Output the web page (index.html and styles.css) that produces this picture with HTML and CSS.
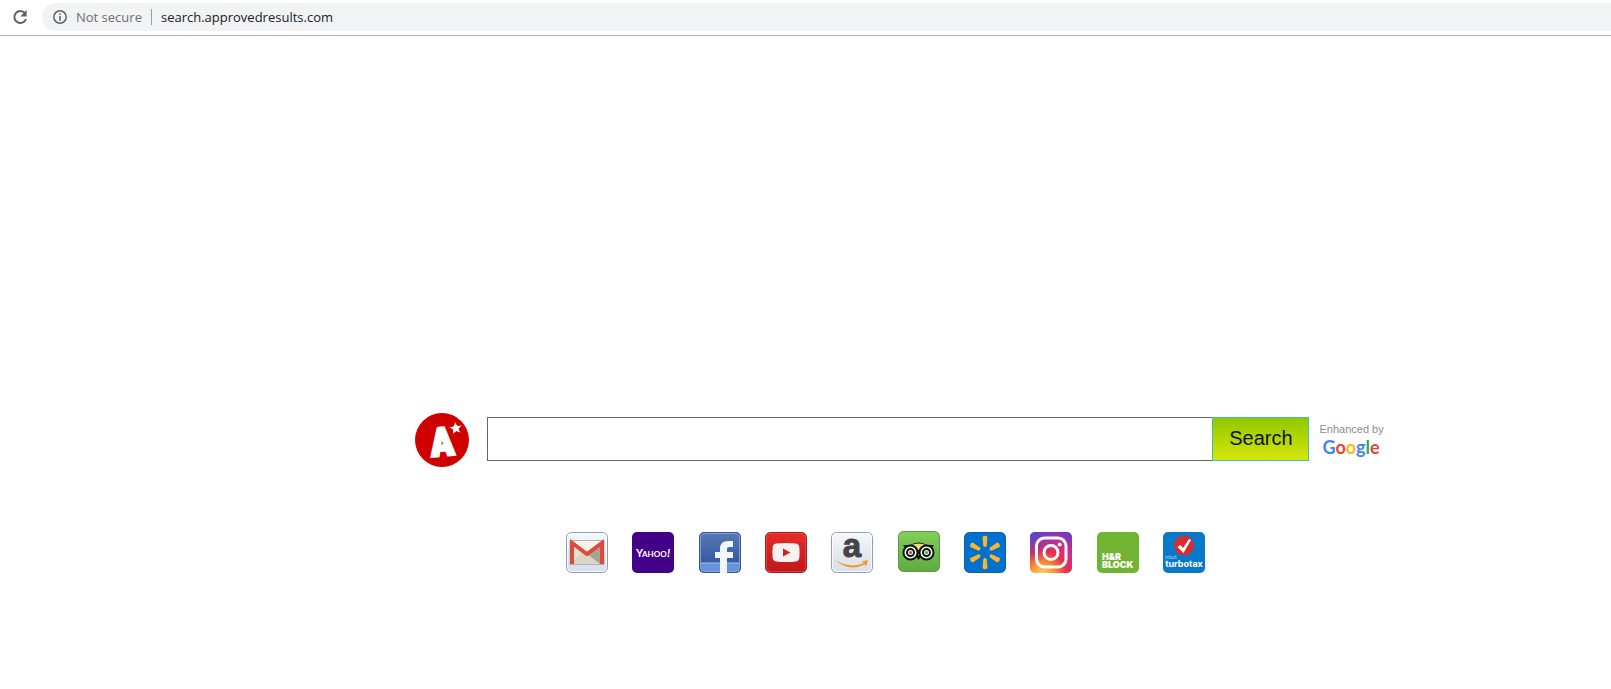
FILE: index.html
```html
<!DOCTYPE html>
<html lang="en">

    <head>
        <meta charset="utf-8">
        <title>search.approvedresults.com</title>
        <link rel="stylesheet" href="styles.css">
    </head>

    <body>
        <header class="toolbar">
            <button type="button" class="reload" aria-label="Reload">
                <svg width="16" height="16" viewBox="0 0 16 16">
                    <path d="M13 4.2A6 6 0 1 0 14 10" fill="none" stroke="#5f6368" stroke-width="2" />
                    <path d="M14.6 1v6.4H8.2z" fill="#5f6368" />
                </svg>
            </button>
            <div class="address">
                <svg width="14" height="14" viewBox="0 0 14 14">
                    <circle cx="7" cy="7" r="6.2" fill="none" stroke="#5f6368" stroke-width="1.5" />
                    <path d="M6.2 3.3h1.6v1.5H6.2zM6.2 6h1.6v4.8H6.2z" fill="#5f6368" />
                </svg>
                <span class="security">Not secure</span>
                <span class="url">search.approvedresults.com</span>
            </div>
        </header>

        <main>
            <form class="search">
                <svg class="logo" width="54" height="54" viewBox="0 0 54 54">
                    <circle cx="27" cy="27" r="27" fill="#cf0000" />
                    <text class="logo-letter" x="27" y="43" text-anchor="middle" transform="rotate(-5 28 28)">A</text>
                    <path d="M40 8l2.300 4.300 5-.2-3.300 3.700 2 4.600-4.700-1.800-3.800 3.200.3-5-4.300-2.600 5-1.300z" fill="#fff" stroke="#cf0000" />
                </svg>
                <input type="text" class="search-box" aria-label="Search the web">
                <button type="submit" class="search-button">Search</button>
                <div class="enhanced">
                    <span>Enhanced by</span>
                    <div class="google"><span class="blue">G</span><span class="red">o</span><span class="yellow">o</span><span class="blue">g</span><span class="green">l</span><span class="red">e</span></div>
                </div>
            </form>

            <nav class="links">
                <a href="#" aria-label="Gmail">
                    <svg viewBox="0 0 42 41">
                        <defs>
                            <linearGradient id="silver" x2="0" y2="1">
                                <stop offset="0" stop-color="#f5f7f9" />
                                <stop offset="1" stop-color="#d8dfe7" />
                            </linearGradient>
                        </defs>
                        <rect x=".5" y=".5" width="41" height="40" rx="5" fill="url(#silver)" stroke="#8ba0b1" />
                        <rect x="1.500" y="1.500" width="39" height="38" rx="4" fill="none" stroke="#fff" stroke-opacity=".7" />
                        <path d="M4 8.500h34v24H4z" fill="#e8e4d5" stroke="#a9b4c0" />
                        <path d="M5 32l11-12 5 4 5-4 11 12z" fill="#dbd7c8" />
                        <path d="M5 9h32L21 22z" fill="#f5f2e6" />
                        <path d="M21 22l16-12v22h-3z" fill="#aaa395" />
                        <path d="M6 32V11L21 22l15-11v21" fill="none" stroke="#dd4b3e" stroke-width="4" />
                    </svg>
                </a>
                <a href="#" aria-label="Yahoo">
                    <svg viewBox="0 0 42 41">
                        <rect width="42" height="41" rx="5" fill="#430089" />
                        <g class="yahoo">
                            <text x="4" y="25" font-size="11">Y</text>
                            <text x="10" y="25" font-size="8">AHOO</text>
                            <text x="35" y="25" font-size="12" font-style="italic">!</text>
                        </g>
                    </svg>
                </a>
                <a href="#" aria-label="Facebook">
                    <svg viewBox="0 0 42 41">
                        <defs>
                            <linearGradient id="facebook" x2="0" y2="1">
                                <stop offset="0" stop-color="#5578b5" />
                                <stop offset="1" stop-color="#2d509b" />
                            </linearGradient>
                            <clipPath id="tile">
                                <rect width="42" height="41" rx="5" />
                            </clipPath>
                        </defs>
                        <g clip-path="url(#tile)">
                            <path d="M0 0h42v41H0z" fill="url(#facebook)" />
                            <path d="M1 31h40v9H1z" fill="#6394db" />
                            <path d="M1 31h40" stroke="#a4c1ed" />
                            <rect x="1.500" y="1.500" width="39" height="38" rx="4" fill="none" stroke="#86a1d0" />
                            <rect x=".5" y=".5" width="41" height="40" rx="5" fill="none" stroke="#35588f" />
                            <path d="M21 41V26h-5v-6h5v-3q0-8 8-8h5v6h-4q-2 0-2 2v3h6v6h-6v15z" fill="#f2f5fa" />
                        </g>
                    </svg>
                </a>
                <a href="#" aria-label="YouTube">
                    <svg viewBox="0 0 42 41">
                        <defs>
                            <linearGradient id="youtube" x2="0" y2="1">
                                <stop offset="0" stop-color="#e52d27" />
                                <stop offset="1" stop-color="#bf171d" />
                            </linearGradient>
                        </defs>
                        <rect x=".5" y=".5" width="41" height="40" rx="5" fill="url(#youtube)" stroke="#a91b20" />
                        <rect x="1.500" y="1.500" width="39" height="38" rx="4" fill="none" stroke="#e75650" stroke-opacity=".6" />
                        <path d="M11 11.500q10-1 20 0 3 .5 3.300 3.500.6 6 0 11-.3 3-3.300 3.400-10 1-20 0-3-.4-3.300-3.400-.6-6 0-11 .3-3 3.300-3.500z" fill="#f6f2f2" />
                        <path d="M18 16.500l7.500 4-7.500 4z" fill="#d6221f" />
                    </svg>
                </a>
                <a href="#" aria-label="Amazon">
                    <svg viewBox="0 0 42 41">
                        <rect x=".5" y=".5" width="41" height="40" rx="5" fill="url(#silver)" stroke="#8ba0b1" />
                        <rect x="1.500" y="1.500" width="39" height="38" rx="4" fill="none" stroke="#fff" stroke-opacity=".7" />
                        <text class="amazon" x="21" y="25" text-anchor="middle">a</text>
                        <path d="M4 28q15 9 29 3l-2.500-1.500 6.500-1.500-2 7-1-2.500Q18 40 4 28z" fill="#f7962a" />
                    </svg>
                </a>
                <a href="#" aria-label="TripAdvisor" class="raised">
                    <svg viewBox="0 0 42 41">
                        <defs>
                            <linearGradient id="trip" x2="0" y2="1">
                                <stop offset="0" stop-color="#81cf57" />
                                <stop offset="1" stop-color="#5eac42" />
                            </linearGradient>
                        </defs>
                        <rect x=".5" y=".5" width="41" height="40" rx="5" fill="url(#trip)" stroke="#5a9850" />
                        <path d="M5 14h7q9-5 17 0h7l-3 4v5H8v-5z" fill="#101610" />
                        <path d="M13 14q8-3 15 0-5 1-7.500 5.500Q18 15 13 14z" fill="#f4dc80" />
                        <path d="M17 24h7l-3.500 5z" fill="#101610" />
                        <g fill="#fff" stroke="#101610" stroke-width="2">
                            <circle cx="12.500" cy="21.500" r="7" />
                            <circle cx="28.500" cy="21.500" r="7" />
                            <circle cx="12.500" cy="21.500" r="3.500" />
                            <circle cx="28.500" cy="21.500" r="3.500" />
                        </g>
                        <circle cx="12.500" cy="21.500" r="1.500" fill="#e33338" />
                        <circle cx="28.500" cy="21.500" r="1.500" fill="#46a34a" />
                    </svg>
                </a>
                <a href="#" aria-label="Walmart">
                    <svg viewBox="0 0 42 41">
                        <rect x=".5" y=".5" width="41" height="40" rx="5" fill="#0071ce" stroke="#125d9e" />
                        <g fill="#fbb52c">
                            <path id="ray" d="M18.500 5q2.500-2.500 5 0L22.700 14q-1.700 2-3.400 0z" />
                            <use href="#ray" transform="rotate(60 21 20.500)" />
                            <use href="#ray" transform="rotate(120 21 20.500)" />
                            <use href="#ray" transform="rotate(180 21 20.500)" />
                            <use href="#ray" transform="rotate(240 21 20.500)" />
                            <use href="#ray" transform="rotate(300 21 20.500)" />
                        </g>
                    </svg>
                </a>
                <a href="#" aria-label="Instagram">
                    <svg viewBox="0 0 42 41">
                        <defs>
                            <radialGradient id="instagram" cx=".3" cy="1.050" r="1.150">
                                <stop offset="0" stop-color="#ffd779" />
                                <stop offset=".25" stop-color="#f99532" />
                                <stop offset=".5" stop-color="#e9304f" />
                                <stop offset=".75" stop-color="#c82d91" />
                                <stop offset="1" stop-color="#7038be" />
                            </radialGradient>
                            <radialGradient id="violet" cx="0" cy="0" r=".7">
                                <stop offset="0" stop-color="#3f51d8" />
                                <stop offset="1" stop-color="#7038be" stop-opacity="0" />
                            </radialGradient>
                        </defs>
                        <rect width="42" height="41" rx="5" fill="url(#instagram)" />
                        <rect width="42" height="41" rx="5" fill="url(#violet)" />
                        <rect x="6.500" y="6" width="29.500" height="29" rx="8" fill="none" stroke="#fff" stroke-width="3" />
                        <circle cx="21" cy="20.500" r="7" fill="none" stroke="#fff" stroke-width="3" />
                        <circle cx="29.700" cy="12.500" r="2" fill="#fff" />
                    </svg>
                </a>
                <a href="#" aria-label="H&amp;R Block">
                    <svg viewBox="0 0 42 41">
                        <rect width="42" height="41" rx="5" fill="#71b432" />
                        <g class="block">
                            <text x="5" y="28">H&amp;R</text>
                            <text x="5" y="36">BLOCK</text>
                        </g>
                    </svg>
                </a>
                <a href="#" aria-label="Intuit TurboTax">
                    <svg viewBox="0 0 42 41">
                        <rect width="42" height="41" rx="5" fill="#0878ca" />
                        <circle cx="21" cy="13.500" r="10" fill="#d92b30" />
                        <path d="M14.500 15l3-2 2.500 3 6-9 2 1-7.500 13z" fill="#fff" />
                        <text class="intuit" x="2" y="27">intuit</text>
                        <text class="turbotax" x="21" y="35" text-anchor="middle">turbotax</text>
                    </svg>
                </a>
            </nav>
        </main>
    </body>

</html>
```
FILE: styles.css
```css
* {
    box-sizing: border-box;
}

body {
    margin: 0;
    background-color: #fff;
    font-family: "Liberation Sans", Arial, sans-serif;
}

/* browser bar */
.toolbar {
    display: flex;
    height: 36px;
    padding: 3px 0 4px 12px;
    border-bottom: 1px solid #b1b1b1;
}

.reload {
    display: flex;
    align-items: center;
    width: 30px;
    padding: 0;
    border: none;
    background: none;
}

.address {
    display: flex;
    flex: 1;
    align-items: center;
    padding-left: 11px;
    border-radius: 14px 0 0 14px;
    background-color: #f1f3f4;
    font-family: "Open Sans", sans-serif;
    font-size: 13px;
    line-height: 16px;
}

.security {
    margin-left: 9px;
    padding-right: 9px;
    border-right: 1px solid #9aa0a6;
    color: #6b6f73;
}

.url {
    margin-left: 9px;
    color: #202124;
}

/* search form */
main {
    padding: 377px 14% 0 415px;
}

.search {
    display: flex;
    align-items: center;
}

.logo {
    flex: none;
    margin-right: 18px;
}

.logo-letter {
    fill: #fff;
    stroke: #fff;
    stroke-width: 2px;
    font-family: "Liberation Sans Narrow", "Roboto Condensed", "Open Sans Condensed", Roboto, sans-serif;
    font-size: 40px;
    font-weight: 900;
}

.search-box,
.search-button {
    height: 44px;
    margin-bottom: 2px;
    font-size: 20px;
}

.search-box {
    flex: 1;
    min-width: 0;
    padding: 0 10px;
    border: 1px solid #666;
    border-right: none;
}

.search-button {
    width: 97px;
    padding: 0 0 2px;
    border: 1px solid #3fbfae;
    background: linear-gradient(#91c800, #d5e60b);
    color: #111;
    font-family: inherit;
}

.enhanced {
    width: 66px;
    margin-left: 10px;
    color: #8c8c8c;
    font-size: 11px;
    line-height: 14px;
    white-space: nowrap;
}

.google {
    padding-left: 3px;
    font-family: Lato, sans-serif;
    font-size: 18px;
    font-weight: bold;
    line-height: 22px;
}

.blue {
    color: #4285f4;
}

.red {
    color: #ea4335;
}

.yellow {
    color: #fbbc05;
}

.green {
    color: #34a853;
}

/* shortcuts */
.links {
    display: flex;
    justify-content: space-between;
    max-width: 639px;
    margin: 65px 0 24px 151px;
}

.links a,
.links svg {
    display: block;
    width: 42px;
    height: 41px;
    overflow: visible;
}

.links .raised {
    margin-top: -1px;
}

.yahoo {
    fill: #fff;
    font-family: Lato, sans-serif;
    font-weight: bold;
}

.amazon {
    fill: #444;
    stroke: #444;
    font-family: "Liberation Sans", sans-serif;
    font-size: 33px;
    font-weight: bold;
}

.block {
    fill: #fff;
    font-family: Inter, sans-serif;
    font-size: 9px;
    font-weight: 900;
}

.intuit {
    fill: #b5dcf3;
    font-family: Inter, sans-serif;
    font-size: 5px;
}

.turbotax {
    fill: #fff;
    font-family: Inter, sans-serif;
    font-size: 9px;
    font-weight: bold;
}
```
